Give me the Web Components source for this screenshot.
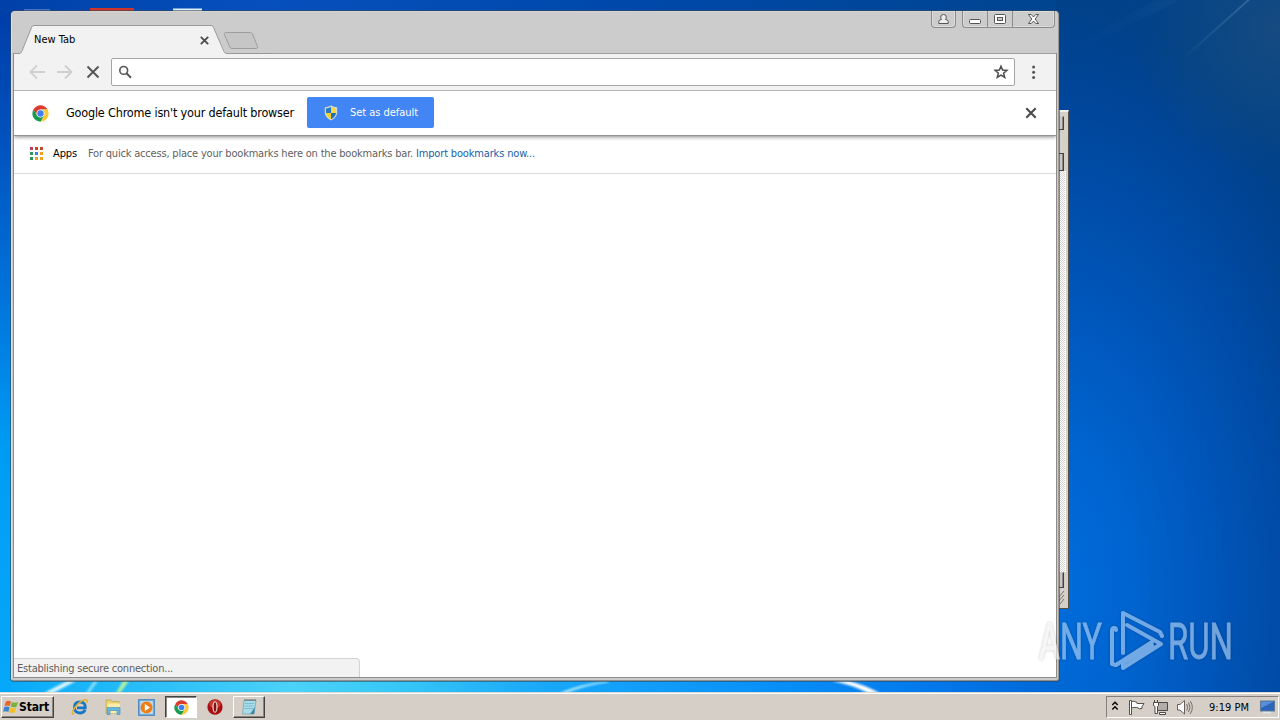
<!DOCTYPE html>
<html lang="en">
<head>
<meta charset="utf-8">
<title>New Tab</title>
<style>
  html, body { margin: 0; width: 1280px; height: 720px; overflow: hidden; }
  body { font: 11px/14px 'DejaVu Sans Condensed', 'DejaVu Sans', sans-serif; font-stretch: condensed; color: #000; }
</style>
</head>
<body>
<desktop-screen>
  <back-window slot="windows"></back-window>
  <browser-window slot="windows">
    <browser-tab slot="tab" label="New Tab"></browser-tab>
    <window-controls slot="tab"></window-controls>
    <browser-toolbar></browser-toolbar>
    <default-bar></default-bar>
    <bookmarks-bar></bookmarks-bar>
    <status-bubble slot="status"><fit-text width="156">Establishing secure connection...</fit-text></status-bubble>
  </browser-window>
  <run-watermark slot="windows"></run-watermark>
  <task-bar slot="taskbar"></task-bar>
</desktop-screen>

<script>
function define(name, html) {
  const template = document.createElement('template');
  template.innerHTML = html;
  customElements.define(name, class extends HTMLElement {
    constructor() {
      super();
      this.attachShadow({ mode: 'open' }).appendChild(template.content.cloneNode(true));
    }
  });
}

// text run that spreads its letters to an exact pixel width
class FitText extends HTMLElement {
  constructor() {
    super();
    this.attachShadow({ mode: 'open' }).innerHTML = `
      <style>
        :host { display: inline-block; white-space: nowrap; flex: none; }
        span { display: inline-block; }
      </style>
      <span><slot></slot></span>`;
  }

  connectedCallback() {
    const span = this.shadowRoot.querySelector('span');
    const width = Number(this.getAttribute('width'));
    const natural = span.getBoundingClientRect().width;
    const count = this.textContent.length;
    this.style.width = width + 'px';
    if (natural && count) span.style.letterSpacing = (width - natural) / count + 'px';
  }
}
customElements.define('fit-text', FitText);

define('chrome-logo', `
  <style>
    :host { display: block; width: 17px; height: 17px; flex: none; }
    svg { display: block; width: 100%; height: 100%; }
  </style>
  <svg viewBox="0 0 48 48">
    <circle cx="24" cy="24" r="23" fill="#fff"/>
    <path d="M4.1 12.5A23 23 0 0 1 43.9 12.5H24A11.5 11.5 0 0 0 14 29.7z" fill="#db3b2f"/>
    <path d="M43.9 12.5A23 23 0 0 1 24 47L34 29.7A11.5 11.5 0 0 0 24 12.5z" fill="#fcc934"/>
    <path d="M24 47A23 23 0 0 1 4.1 12.5L14 29.7A11.5 11.5 0 0 0 34 29.7z" fill="#1a9a50"/>
    <circle cx="24" cy="24" r="10.5" fill="#e6edf8"/>
    <circle cx="24" cy="24" r="8.9" fill="#3f80ee"/>
  </svg>`);

define('desktop-screen', `
  <style>
    :host {
      display: flex; flex-direction: column; position: relative;
      width: 1280px; height: 720px; overflow: hidden;
      background: linear-gradient(#003ca8, #0050bc 130px, #0074dc 300px, #009cf4 450px, #06a8fb 690px);
    }
    .wall { position: absolute; inset: 0; width: 1280px; height: 693px; }
    .desk { flex: 1; position: relative; }
  </style>
  <svg class="wall" viewBox="0 0 1280 693">
    <defs>
      <linearGradient id="top"><stop offset="0" stop-color="#0040a8"/><stop offset=".25" stop-color="#0650bd"/><stop offset=".6" stop-color="#0048aa"/><stop offset="1" stop-color="#00458f"/></linearGradient>
      <linearGradient id="bottom"><stop offset="0" stop-color="#08aafa"/><stop offset=".1" stop-color="#27bdf8"/><stop offset=".22" stop-color="#4bd2f7"/><stop offset=".3" stop-color="#38c8f6"/><stop offset=".42" stop-color="#18a8f8"/><stop offset=".6" stop-color="#0890f8"/><stop offset=".72" stop-color="#0479ec"/><stop offset=".85" stop-color="#0063d2"/></linearGradient>
      <radialGradient id="right" gradientUnits="userSpaceOnUse" cx="0" cy="0" r="1" gradientTransform="translate(1050 590) scale(325 590)">
        <stop offset="0" stop-color="#006edc"/><stop offset=".25" stop-color="#0064d0"/><stop offset=".5" stop-color="#0056ba"/><stop offset=".7" stop-color="#004ca7"/><stop offset=".85" stop-color="#004598"/><stop offset="1" stop-color="#004189"/>
      </radialGradient>
      <radialGradient id="corner" gradientUnits="userSpaceOnUse" cx="1280" cy="30" r="150">
        <stop offset="0" stop-color="#154b80"/><stop offset="1" stop-color="#154b80" stop-opacity="0"/>
      </radialGradient>
      <linearGradient id="ray" x1="1" x2="0"><stop stop-color="#6c9cc8" stop-opacity=".35"/><stop offset="1" stop-color="#6c9cc8" stop-opacity="0"/></linearGradient>
      <filter id="soft"><feGaussianBlur stdDeviation=".8"/></filter>
    </defs>
    <rect x="0" width="1060" height="14" fill="url(#top)"/>
    <rect x="11" y="678" width="1269" height="15" fill="url(#bottom)"/>
    <rect x="1056" width="224" height="693" fill="url(#right)"/>
    <rect x="1056" width="224" height="200" fill="url(#corner)"/>
    <path d="M1247 0L1180 60L1182 61L1250 0z" fill="url(#ray)"/>
    <path d="M1156 0L1065 48L1100 40L1180 0z" fill="url(#ray)" opacity=".2" filter="url(#soft)"/>
    <g filter="url(#soft)">
      <path d="M67 681L44 693H53L76 681z" fill="#d8f6ff"/>
      <path d="M94 681L86 693H89L98 681z" fill="#8ce0ff"/>
      <path d="M123 681L116 693H120L129 681z" fill="#b2f09c"/>
      <path d="M606 681Q582 684 559 693H566Q590 684 610 682z" fill="#b6eeff"/>
      <path d="M832 681Q850 684 868 693H880Q862 684 849 681z" fill="#fff"/>
    </g>
    <rect x="24" y="9" width="26" height="2" fill="#4a70c0"/>
    <rect x="90" y="8" width="44" height="4" fill="#d23427"/>
    <rect x="173" y="8.5" width="29" height="3" fill="#dff0f6"/>
  </svg>
  <div class="desk"><slot name="windows"></slot></div>
  <slot name="taskbar"></slot>`);

define('back-window', `
  <style>
    :host {
      position: absolute; left: 1040px; top: 110px; width: 29px; height: 499px; box-sizing: border-box;
      background: #d4d0c8;
      border-top: 2px solid #f2f0ec; border-right: 1px solid #55504a; border-bottom: 1px solid #55504a;
      display: flex; flex-direction: column; padding: 4px 4px 3px 16px;
    }
    i { display: block; box-sizing: border-box; border: 1px solid #c9c6c3; border-right-color: #424148; border-bottom-color: #424148; background: #c9c6c3; box-shadow: inset -1px 0 #8a8785; flex: none; width: 8px; margin-right: 5px; }
    .cap { height: 14px; }
    .up { height: 18px; margin-top: 23px; border-top-color: #424148; }
    .track { flex: 1; width: 9px; border: 0; box-shadow: 1px 0 #fff; background: repeating-conic-gradient(#d8d4ce 0 25%, #fff 0 50%) 0 0 / 2px 2px; }
    .down { height: 16px; }
    svg { width: 8px; height: 17px; }
  </style>
  <i class="cap"></i><i class="up"></i><i class="track"></i><i class="down"></i>
  <svg><path d="M2 10L8 3M2 14L8 7M4 16L8 11" stroke="#77736e"/></svg>`);

define('browser-window', `
  <style>
    :host {
      position: absolute; left: 11px; top: 11px; width: 1048px; height: 670px; box-sizing: border-box;
      display: flex; flex-direction: column;
      border: 1px solid #b9b9b9; border-top-color: #d6d3cf; border-left-color: #dedede; border-right-color: #9b9c99; border-bottom-color: #8e8e8e;
      border-radius: 4px 4px 3px 3px; background: #ccc;
      box-shadow: 0 0 0 1px #34475c99;
    }
    header { height: 41px; flex: none; display: flex; justify-content: space-between; }
    main {
      flex: 1; margin: 0 1px 2px; display: flex; flex-direction: column; background: #fff;
      border: 1px solid #8f8b87; border-top: 0; position: relative;
    }
    .status { margin-top: auto; display: flex; }
  </style>
  <header><slot name="tab"></slot></header>
  <main><slot></slot><div class="status"><slot name="status"></slot></div></main>`);

class BrowserTab extends HTMLElement {
  constructor() {
    super();
    this.attachShadow({ mode: 'open' }).innerHTML = `
      <style>
        :host { display: grid; width: 260px; height: 42px; margin-left: 2px; position: relative; z-index: 1; }
        svg, .row { grid-area: 1 / 1; }
        .row { display: flex; align-items: flex-start; padding: 21px 0 0 20px; font-size: 11px; line-height: 14px; }
        .x { margin: 2.5px 0 0 122.5px; }
      </style>
      <svg width="260" height="42" viewBox="14 12 260 42">
        <path d="M14 53.5H20.5L31.5 27.5Q32.3 25.5 34 25.5H211Q212.5 25.5 213.5 27.5L225.5 53.5H280V54.5H14z" fill="#f2f2f2"/>
        <path d="M14 53.5H19Q21 53.5 22 51L31.5 27.5Q32.3 25.5 34 25.5H211Q212.7 25.5 213.5 27.5L224 51.5Q225 53.5 227 53.5H275" fill="none" stroke="#999"/>
        <path d="M225.5 32.5H250.5Q252 32.5 252.6 34L257.5 46.5Q258 48.5 256 48.5H232Q230.5 48.5 229.8 47L224.4 34.5Q224 32.5 225.5 32.5z" fill="#c6c6c6" stroke="#9e9e9e"/>
      </svg>
      <div class="row">
        <fit-text width="43"></fit-text>
        <svg class="x" width="9" height="9"><path d="M.8 .8L8.2 8.2M8.2 .8L.8 8.2" stroke="#4b4b4b" stroke-width="1.8"/></svg>
      </div>`;
    this.shadowRoot.querySelector('fit-text').textContent = this.getAttribute('label');
  }
}
customElements.define('browser-tab', BrowserTab);

define('window-controls', `
  <style>
    :host { display: flex; gap: 6px; margin-right: 3px; height: 16px; margin-top: -1px; }
    div { display: flex; box-sizing: border-box; height: 17px; border: 1px solid #8c8c8c; border-top: 0; border-radius: 0 0 4px 4px; box-shadow: inset 0 0 0 1px #dadada; }
    span { display: flex; justify-content: center; align-items: center; width: 24px; }
    span + span { border-left: 1px solid #8c8c8c; }
    .user { width: 23px; }
    .close { width: 41px; }
    svg { display: block; }
  </style>
  <div><span class="user"><svg width="11" height="12" fill="#eee" stroke="#555"><path d="M.8 10.5V8.5Q.8 6.8 3.6 6.4Q2.7 5.5 2.7 4Q2.7 1.5 5.5 1.5T8.3 4Q8.3 5.5 7.4 6.4Q10.2 6.8 10.2 8.5V10.5z"/></svg></span></div>
  <div>
    <span><svg width="12" height="13"><rect x=".5" y="6.5" width="11" height="4" rx="1" fill="#fff" stroke="#555"/></svg></span>
    <span><svg width="12" height="12" fill="#fff" stroke="#555"><rect x=".5" y="1.5" width="11" height="9" rx="1"/><rect x="3.5" y="4.5" width="5" height="3" fill="#ccc"/></svg></span>
    <span class="close"><svg width="13" height="12"><path d="M1.5 1.5H4.2L6.5 4L8.8 1.5H11.5L8.2 6L11.5 10.5H8.8L6.5 8L4.2 10.5H1.5L4.8 6z" fill="#fff" stroke="#555"/></svg></span>
  </div>`);

define('browser-toolbar', `
  <style>
    :host { display: flex; align-items: center; height: 38px; box-sizing: border-box; background: #f2f2f2; border-bottom: 1px solid #b4b4b4; border-top: 1px solid #a0a0a0; padding: 0 18px 0 14px; flex: none; }
    svg { display: block; flex: none; fill: none; }
    .forward { margin-left: 10px; }
    .stop { margin-left: 12px; }
    .menu { fill: #555; }
    .address { flex: 1; height: 28px; box-sizing: border-box; border: 1px solid #a5a5a5; border-radius: 2px; background: #fff; margin: 0 15px 0 11px; display: flex; align-items: center; justify-content: space-between; padding: 0 5px 0 6px; }
  </style>
  <svg width="18" height="16"><path d="M17 8H2.5M9 1.5L2.5 8L9 14.5" stroke="#cfcfcf" stroke-width="1.8"/></svg>
  <svg class="forward" width="18" height="16"><path d="M1 8H15.5M9 1.5L15.5 8L9 14.5" stroke="#cfcfcf" stroke-width="1.8"/></svg>
  <svg class="stop" width="14" height="14"><path d="M1.5 1.5L12.5 12.5M12.5 1.5L1.5 12.5" stroke="#555" stroke-width="1.9"/></svg>
  <div class="address">
    <svg width="14" height="14"><circle cx="5.7" cy="5.4" r="3.9" stroke="#555" stroke-width="1.6"/><path d="M8.5 8.2L13 12.7" stroke="#555" stroke-width="2"/></svg>
    <svg width="16" height="16"><path d="M8 2.2L9.6 6.1L13.9 6.4L10.6 9.2L11.7 13.4L8 11.1L4.3 13.4L5.4 9.2L2.1 6.4L6.4 6.1z" stroke="#4c4c4c" stroke-width="1.5"/></svg>
  </div>
  <svg class="menu" width="8" height="14"><circle cx="3.6" cy="2" r="1.5"/><circle cx="3.6" cy="7.2" r="1.5"/><circle cx="3.6" cy="12.4" r="1.5"/></svg>`);

define('default-bar', `
  <style>
    :host { display: flex; align-items: center; height: 44px; background: #fff; padding: 0 19px 0 18px; border-bottom: 1px solid #929292; box-shadow: 0 1px 4px #0007; clip-path: inset(0 0 -6px); flex: none; position: relative; }
    .msg { margin-left: 17px; font-size: 12.5px; }
    button { all: unset; display: flex; align-items: center; width: 127px; height: 31px; box-sizing: border-box; background: #4285f4; border-radius: 2px; color: #fff; margin: 0 auto 1px 13px; padding-left: 17px; }
    button fit-text { margin-left: 12px; }
  </style>
  <chrome-logo></chrome-logo>
  <fit-text class="msg" width="228">Google Chrome isn't your default browser</fit-text>
  <button>
    <svg width="14" height="16" viewBox="0 0 14 16">
      <path d="M7 .5Q10 2.3 13.2 2.3V8Q12.6 13 7 15.5Q1.4 13 .8 8V2.3Q4 2.3 7 .5z" fill="#cfdccf"/>
      <path d="M7 2Q4.5 3.3 2 3.4V8H7z" fill="#2878c2"/><path d="M7 2Q9.5 3.3 12 3.4V8H7z" fill="#f9d740"/>
      <path d="M2 8Q2.5 12 7 14.2V8z" fill="#f6cf2c"/><path d="M12 8Q11.5 12 7 14.2V8z" fill="#2471b8"/>
    </svg>
    <fit-text width="68">Set as default</fit-text>
  </button>
  <svg width="12" height="12"><path d="M1.3 1.3L10.7 10.7M10.7 1.3L1.3 10.7" stroke="#4b4b4b" stroke-width="2.1"/></svg>`);

define('bookmarks-bar', `
  <style>
    :host { display: flex; align-items: center; height: 38px; box-sizing: border-box; background: #fff; border-bottom: 1px solid #d9d9d9; padding: 0 0 2px 16px; flex: none; }
    .apps { display: grid; grid-template-columns: repeat(3, 3px); gap: 2px; margin: 0 10px 1px 0; }
    .apps i { width: 3px; height: 3px; }
    .hint { color: #5f5f5f; margin-left: 11px; }
    .link { color: #2060a8; margin-left: 3px; }
  </style>
  <div class="apps">
    <i style="background:#b64059"></i><i style="background:#cf4023"></i><i style="background:#c44a20"></i>
    <i style="background:#2e9a5c"></i><i style="background:#3f7fe8"></i><i style="background:#f3a022"></i>
    <i style="background:#2c9258"></i><i style="background:#e8a32c"></i><i style="background:#f0a81e"></i>
  </div>
  <fit-text width="24">Apps</fit-text>
  <fit-text class="hint" width="325">For quick access, place your bookmarks here on the bookmarks bar.</fit-text>
  <fit-text class="link" width="119">Import bookmarks now...</fit-text>`);

define('status-bubble', `
  <style>
    :host { display: flex; align-items: center; width: 346px; height: 19px; box-sizing: border-box; background: #f2f2f2; border: 1px solid #d2d2d2; border-left: 0; border-bottom: 0; border-top-right-radius: 4px; padding: 2px 0 0 3px; color: #5c5c5c; }
  </style>
  <slot></slot>`);

define('run-watermark', `
  <style>
    :host { position: absolute; left: 1030px; top: 605px; width: 245px; height: 80px; }
    svg { display: block; filter: drop-shadow(0 0 1.5px #0005); }
    text { font: 400 50px Roboto, 'Liberation Sans', sans-serif; stroke-width: .8px; }
  </style>
  <svg width="245" height="80" opacity=".62">
    <defs>
      <linearGradient id="edge" gradientUnits="userSpaceOnUse" x1="0" x2="245" y1="0" y2="0"><stop offset=".118" stop-color="#f2f2f2"/><stop offset=".119" stop-color="#b9d6f6"/></linearGradient>
    </defs>
    <text x="9" y="54" fill="url(#edge)" stroke="url(#edge)" textLength="63" lengthAdjust="spacingAndGlyphs">ANY</text>
    <text x="138" y="54" fill="#b9d6f6" stroke="#b9d6f6" textLength="65" lengthAdjust="spacingAndGlyphs">RUN</text>
    <g fill="none" stroke="#b9d6f6" stroke-width="4" stroke-linejoin="round" stroke-linecap="round">
      <path d="M86 25Q86 23 84 23Q82 23 82 26V59L86 60L122 37"/>
      <path d="M132 31L130 27L93 8V48"/>
      <path d="M97 20L131 39L93 63V58L122 40"/>
    </g>
  </svg>`);

define('task-bar', `
  <style>
    :host { display: flex; align-items: center; height: 28px; box-sizing: border-box; background: #d5cfc8; border-top: 1px solid #ded9d2; box-shadow: inset 0 1px #fff; padding: 1px 1px 0 1px; position: relative; }
    svg { display: block; flex: none; }
    .start, .app { display: flex; align-items: center; box-sizing: border-box; border: 1px solid; border-color: #fff #424242 #424242 #fff; box-shadow: inset -1px -1px #8a8580; height: 22px; }
    .start { width: 53px; padding-left: 1px; font: bold 12px/14px 'DejaVu Sans Condensed', 'DejaVu Sans', sans-serif; font-stretch: condensed; }
    .quick { display: flex; align-items: center; margin-left: 17px; }
    .app { width: 32px; justify-content: center; }
    .on { border-color: #424242 #fff #fff #424242; box-shadow: inset 1px 1px #8a8580; background: #fff; }
    .tray { margin-left: auto; display: flex; align-items: center; height: 22px; width: 173px; box-sizing: border-box; border: 1px solid; border-color: #85807b #fff #fff #85807b; padding-left: 4px; }
    .tray fit-text { margin-top: 1px; }
  </style>
  <div class="start">
    <svg width="16" height="16" viewBox="0 0 16 16">
      <path d="M2.8 2.7Q5 1 8 2.5L6.8 7.3Q4.5 6 1.5 7.2z" fill="#e5662b"/>
      <path d="M8.8 3Q11.5 4.5 15 3L13.5 7.7Q10.8 9 7.7 7.6z" fill="#7ab03c"/>
      <path d="M1.2 8Q4 7 6.6 8.2L5.3 13Q3 11.7 .2 12.8z" fill="#3c82cc"/>
      <path d="M7.4 8.6Q10 9.8 13.2 8.5L11.8 13.2Q9 14.8 6 13.2z" fill="#f3bc2b"/>
    </svg>
    <fit-text width="30">Start</fit-text>
  </div>
  <div class="quick">
    <svg width="18" height="18" viewBox="0 0 18 18">
      <path d="M14.2 11.8Q12.5 15 9 15Q3.4 15 3.4 9.5T9 4Q14.5 4 14.3 9.8H6" fill="none" stroke="#1976c4" stroke-width="2.8"/>
      <path d="M3 16Q-.5 16 3.5 10Q9 2.5 14 1.7Q17.5 1.5 15.5 5" fill="none" stroke="#e2b32b" stroke-width="1.5"/>
    </svg>
    <svg width="18" height="18" viewBox="0 0 18 18" style="margin-left:15px">
      <path d="M2 4V2H7L8 3.5H15V15H2z" fill="#ead270" stroke="#bfa34e" stroke-width=".7"/>
      <path d="M3.5 5.5H16V15H3.5z" fill="#f8eda9"/>
      <path d="M3 16.5V9.5H16V16.5H13V12.5H6V16.5z" fill="#63b8df" stroke="#3e8cba" stroke-width=".6"/>
    </svg>
    <svg width="17" height="17" style="margin-left:16px">
      <rect x=".7" y=".7" width="15.6" height="15.6" fill="#8bbbe6" stroke="#4b86bd" stroke-width="1.2"/>
      <rect x="2.3" y="2.3" width="12.4" height="12.4" fill="#c9e2f3"/>
      <circle cx="8.5" cy="8.5" r="6" fill="#ed7f16"/><path d="M6.8 5L12 8.5L6.8 12z" fill="#fff"/>
    </svg>
    <div class="app on" style="margin-left:10px"><chrome-logo style="width:15px;height:15px"></chrome-logo></div>
    <svg width="16" height="16" style="margin-left:10px">
      <ellipse cx="8" cy="8" rx="7.6" ry="7.8" fill="#a90f12"/><ellipse cx="8" cy="5" rx="5.8" ry="4" fill="#c63a34"/>
      <ellipse cx="8" cy="8" rx="2.6" ry="5.8" fill="#f5e4df"/><ellipse cx="8" cy="8" rx="1.4" ry="4.8" fill="#8a1010"/>
    </svg>
    <div class="app" style="margin-left:10px">
      <svg width="17" height="18" viewBox="0 0 17 18">
        <path d="M3 2.5H15L13 16H1.5z" fill="#a9dce8" stroke="#77a5b0" stroke-width=".8"/>
        <path d="M4 5.5H13M3.7 8H12.7M3.4 10.5H12.3" stroke="#6eb6c9" stroke-width=".8"/>
        <path d="M13 16H9L14 9z" fill="#348ca5"/>
        <path d="M3.5 2H15" stroke="#606a6d" stroke-width="2" stroke-dasharray="1 1"/>
      </svg>
    </div>
  </div>
  <div class="tray">
    <svg width="8" height="14" fill="none" stroke="#000" stroke-width="1.4"><path d="M1.3 5L4 2.3L6.7 5M1.3 9.5L4 6.8L6.7 9.5"/></svg>
    <svg width="17" height="17" style="margin-left:9px" fill="#fff" stroke="#55514d"><path d="M1.5 1.5H3.5V15.5H1.5z"/><path d="M3.5 2.5Q6 1.5 9 3.5V4.5H16Q13 8 14 9.5Q11 10.5 9 8.5Q6 8 3.5 9z"/></svg>
    <svg width="17" height="17" style="margin-left:7px" fill="#fff" stroke="#4c4946"><path d="M5.5 3.5H15.5V11.5H5.5z" fill="#b1adaa"/><path d="M7.5 13.5H13.5V15.5H7.5zM1.5 3.5H6.5V6.5L5.5 7.5V14.5H3V7.5L1.5 6.5zM2.5 1V3.5M5.5 1V3.5"/></svg>
    <svg width="18" height="17" style="margin-left:7px" fill="#fff" stroke="#65615d"><path d="M1.5 5.5H4L8.5 1.5V15L4 11H1.5z"/><path d="M10.7 5Q12.5 8.3 10.7 11.5M12.5 3.5Q15.5 8.3 12.5 13M14.2 2Q18.5 8.3 14.2 15" fill="none" stroke-width=".9"/></svg>
    <fit-text width="40" style="margin-left:15px">9:19 PM</fit-text>
    <svg width="15" height="14" style="margin-left:11px"><rect x=".5" y="1" width="14" height="10" fill="#2b66bd" stroke="#647990"/><path d="M1 1.5H14L1 8z" fill="#598fda"/><path d="M3 12.5H11" stroke="#dfe8f0" stroke-width="1.5"/></svg>
  </div>`);
</script>
</body>
</html>
